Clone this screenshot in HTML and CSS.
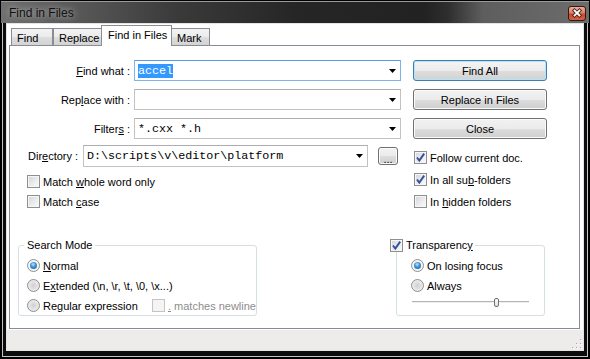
FILE: index.html
```html
<!DOCTYPE html>
<html lang="en">
<head>
    <meta charset="UTF-8">
    <title>Find in Files</title>
    <link rel="stylesheet" href="styles.css">
</head>
<body>
    <div class="window">
        <div class="titlebar">
            <span class="title">Find in Files</span>
            <span class="close-btn">
                <svg width="18" height="15" viewBox="0 0 18 15">
                    <path d="M6.5 4.5 L11.5 9.5 M11.5 4.5 L6.5 9.5" stroke="#4a2018" stroke-width="3.6" stroke-linecap="square"/>
                    <path d="M6.5 4.5 L11.5 9.5 M11.5 4.5 L6.5 9.5" stroke="#fff" stroke-width="1.8" stroke-linecap="square"/>
                </svg>
            </span>
        </div>
        <div class="client">
            <div class="tabs">
                <div class="tab tab-find">Find</div>
                <div class="tab tab-replace">Replace</div>
                <div class="tab tab-active">Find in Files</div>
                <div class="tab tab-mark">Mark</div>
            </div>
            <div class="panel">
                <div class="top">
                    <div class="fields">
                        <div class="field">
                            <span class="field-label"><u>F</u>ind what :</span>
                            <div class="combo combo-wide combo-focus">
                                <span class="combo-text"><span class="sel">accel</span></span>
                                <svg class="arrow" width="7" height="4" viewBox="0 0 7 4"><path d="M0 0 H7 L3.5 4 Z" fill="#000"/></svg>
                            </div>
                        </div>
                        <div class="field">
                            <span class="field-label">Rep<u>l</u>ace with :</span>
                            <div class="combo combo-wide">
                                <span class="combo-text"></span>
                                <svg class="arrow" width="7" height="4" viewBox="0 0 7 4"><path d="M0 0 H7 L3.5 4 Z" fill="#000"/></svg>
                            </div>
                        </div>
                        <div class="field">
                            <span class="field-label">Filter<u>s</u> :</span>
                            <div class="combo combo-wide">
                                <span class="combo-text">*.cxx *.h</span>
                                <svg class="arrow" width="7" height="4" viewBox="0 0 7 4"><path d="M0 0 H7 L3.5 4 Z" fill="#000"/></svg>
                            </div>
                        </div>
                    </div>
                    <div class="buttons">
                        <button class="btn btn-default">Find All</button>
                        <button class="btn">Replace in Files</button>
                        <button class="btn">Close</button>
                    </div>
                </div>

                <div class="mid">
                    <div class="mid-left">
                        <div class="dir-row">
                            <span class="dir-label">Dir<u>e</u>ctory :</span>
                            <div class="combo combo-dir">
                                <span class="combo-text">D:\scripts\v\editor\platform</span>
                                <svg class="arrow" width="7" height="4" viewBox="0 0 7 4"><path d="M0 0 H7 L3.5 4 Z" fill="#000"/></svg>
                            </div>
                            <button class="btn btn-browse">...</button>
                        </div>
                        <div class="checks-left">
                            <div class="check"><span class="cb"></span><span>Match <u>w</u>hole word only</span></div>
                            <div class="check"><span class="cb"></span><span>Match <u>c</u>ase</span></div>
                        </div>
                    </div>
                    <div class="mid-right">
                        <div class="check">
                            <span class="cb"><svg width="11" height="11" viewBox="0 0 11 11"><path d="M2 5.5 L4.3 8.6 L9.2 1.6" stroke="#33509a" stroke-width="1.9" fill="none"/></svg></span>
                            <span>Follow current doc.</span>
                        </div>
                        <div class="check">
                            <span class="cb"><svg width="11" height="11" viewBox="0 0 11 11"><path d="M2 5.5 L4.3 8.6 L9.2 1.6" stroke="#33509a" stroke-width="1.9" fill="none"/></svg></span>
                            <span>In all su<u>b</u>-folders</span>
                        </div>
                        <div class="check"><span class="cb"></span><span>In <u>h</u>idden folders</span></div>
                    </div>
                </div>

                <div class="bottom">
                    <fieldset class="group group-mode">
                        <legend>Search Mode</legend>
                        <div class="radio-list">
                            <div class="radio-row"><span class="radio on"></span><span><u>N</u>ormal</span></div>
                            <div class="radio-row"><span class="radio"></span><span>E<u>x</u>tended (\n, \r, \t, \0, \x...)</span></div>
                            <div class="radio-row">
                                <span class="radio"></span><span class="regex-text">Re<u>g</u>ular expression</span>
                                <span class="check disabled"><span class="cb"></span><span><u>.</u> matches newline</span></span>
                            </div>
                        </div>
                    </fieldset>
                    <fieldset class="group group-trans">
                        <legend class="check">
                            <span class="cb"><svg width="11" height="11" viewBox="0 0 11 11"><path d="M2 5.5 L4.3 8.6 L9.2 1.6" stroke="#33509a" stroke-width="1.9" fill="none"/></svg></span>
                            <span>Transparenc<u>y</u></span>
                        </legend>
                        <div class="radio-list">
                            <div class="radio-row"><span class="radio on"></span><span>On losing focus</span></div>
                            <div class="radio-row"><span class="radio"></span><span>Always</span></div>
                        </div>
                        <div class="slider">
                            <span class="track track-left"></span>
                            <span class="thumb"></span>
                            <span class="track track-right"></span>
                        </div>
                    </fieldset>
                </div>
            </div>
            <div class="statusbar">
                <svg class="grip" width="11" height="11" viewBox="0 0 11 11">
                    <g fill="#fff"><rect x="10" y="2" width="1" height="1"/><rect x="10" y="6" width="1" height="1"/><rect x="6" y="6" width="1" height="1"/><rect x="10" y="10" width="1" height="1"/><rect x="6" y="10" width="1" height="1"/><rect x="2" y="10" width="1" height="1"/></g>
                    <g fill="#a9a6a6"><rect x="9" y="1" width="1" height="1"/><rect x="9" y="5" width="1" height="1"/><rect x="5" y="5" width="1" height="1"/><rect x="9" y="9" width="1" height="1"/><rect x="5" y="9" width="1" height="1"/><rect x="1" y="9" width="1" height="1"/></g>
                </svg>
            </div>
        </div>
    </div>
</body>
</html>
```

FILE: styles.css
```css
body {
    margin: 0;
    background: #fff;
    font-family: "Liberation Sans", Arial, sans-serif;
    font-size: 11px;
    color: #000;
}
.window {
    width: 590px;
    height: 359px;
    box-sizing: border-box;
    border: 1px solid #000;
    background: #0c0c0c;
    box-shadow: inset 0 0 0 1px #000, inset 0 0 0 2px #c4c4c4;
    display: flex;
    flex-direction: column;
}
.titlebar {
    height: 22px;
    flex-shrink: 0;
    display: flex;
    justify-content: space-between;
    align-items: flex-start;
    padding: 0 3px 0 8px;
    background: linear-gradient(to right, #707070 0%, #5a5a5a 12%, #3a3a3a 30%, #262626 50%, #222 72%, #2e2e2e 76%, #5e5e5e 82%, #6c6c6c 100%);
    box-shadow: inset 0 1px 0 #9a9a9a;
}
.title {
    font-size: 12px;
    line-height: 22px;
    padding-top: 1px;
    color: #111;
    text-shadow: 0 0 6px rgba(220, 220, 220, 0.7), 0 0 10px rgba(200, 200, 200, 0.5);
}
.close-btn {
    display: block;
    width: 18px;
    height: 15px;
    margin-top: 5px;
    box-sizing: border-box;
    border: 1px solid #3a1610;
    border-radius: 3px;
    background: linear-gradient(#eab0a0 0%, #dc7e66 45%, #c8472d 55%, #d0654a 100%);
    overflow: hidden;
}
.close-btn svg {
    display: block;
    margin: -1px 0 0 -1px;
}
.client {
    flex: 1;
    margin: 1px 6px 8px 6px;
    background: #fff;
    box-shadow: 0 0 0 1px #e4e4e4;
    display: flex;
    flex-direction: column;
}

/* tabs */
.tabs {
    height: 21px;
    flex-shrink: 0;
    display: flex;
    align-items: flex-end;
    padding-left: 4px;
}
.tab {
    height: 17px;
    box-sizing: border-box;
    border: 1px solid #898c95;
    border-bottom: none;
    background: linear-gradient(#f3f3f3 0%, #ebebeb 50%, #dddddd 51%, #d3d3d3 100%);
    padding: 3px 0 0 5px;
    line-height: 13px;
    white-space: nowrap;
}
.tab-find { width: 42px; }
.tab-replace { width: 49px; margin-left: 0; }
.tab-active {
    position: relative;
    z-index: 1;
    width: 71px;
    height: 21px;
    margin-left: -1px;
    margin-bottom: -1px;
    padding: 3px 0 0 6px;
    background: #fff;
}
.tab-mark { width: 39px; margin-left: -1px; }

.panel {
    margin-left: 2px;
    width: 571px;
    height: 284px;
    flex-shrink: 0;
    box-sizing: border-box;
    border: 1px solid #898c95;
    background: #fff;
}

/* combos and buttons */
.top {
    display: flex;
    margin-top: 14px;
}
.fields {
    display: flex;
    flex-direction: column;
    gap: 8px;
}
.field {
    display: flex;
    align-items: center;
    height: 21px;
}
.field-label {
    width: 120px;
    margin-right: 4px;
    text-align: right;
    white-space: nowrap;
}
.combo {
    display: flex;
    align-items: center;
    height: 21px;
    box-sizing: border-box;
    border: 1px solid #c3c3c3;
    border-top-color: #abadb3;
    background: #fff;
}
.combo-focus {
    border-color: #7eb4ea;
    border-top-color: #569de5;
}
.combo-wide { width: 267px; }
.combo-text {
    flex: 1;
    padding-left: 3px;
    font-family: "Liberation Mono", "Courier New", monospace;
    font-size: 11.7px;
    line-height: 14px;
    white-space: pre;
}
.sel {
    background: #3399ff;
    color: #fff;
}
.arrow {
    display: block;
    margin-right: 4px;
}
.buttons {
    display: flex;
    flex-direction: column;
    gap: 8px;
    width: 134px;
    margin-left: 12px;
}
.btn {
    height: 21px;
    box-sizing: border-box;
    border: 1px solid #707070;
    border-radius: 3px;
    background: linear-gradient(#f2f2f2 0%, #ebebeb 50%, #dddddd 51%, #cfcfcf 100%);
    box-shadow: inset 0 0 0 1px #fbfbfb;
    font-family: "Liberation Sans", Arial, sans-serif;
    font-size: 11px;
    color: #000;
    padding: 0;
}
.btn-default {
    border-color: #3c7fb1;
    box-shadow: inset 0 0 0 1px #b8e2f6;
    background: linear-gradient(#eaf6fd 0%, #d9f0fc 50%, #bee6fd 51%, #a7d9f5 100%);
    background: linear-gradient(#f4f4f4 0%, #ececec 50%, #dedede 51%, #d2d2d2 100%);
}

/* directory row and checks */
.mid {
    display: flex;
    margin-top: 6px;
}
.mid-left { width: 404px; }
.dir-row {
    display: flex;
    align-items: center;
    height: 22px;
    padding-left: 18px;
}
.dir-label {
    width: 55px;
    white-space: nowrap;
}
.combo-dir {
    width: 285px;
    height: 22px;
}
.btn-browse {
    width: 20px;
    height: 18px;
    margin-left: 10px;
    line-height: 18px;
    padding-top: 2px;
}
.checks-left {
    display: flex;
    flex-direction: column;
    gap: 7px;
    margin-top: 8px;
    padding-left: 17px;
}
.mid-right {
    display: flex;
    flex-direction: column;
    gap: 9px;
    padding-top: 6px;
}
.check {
    display: flex;
    align-items: center;
    gap: 3px;
    height: 13px;
    white-space: nowrap;
}
.cb {
    display: block;
    width: 13px;
    height: 13px;
    flex-shrink: 0;
    box-sizing: border-box;
    border: 1px solid #8e8f8f;
    background: linear-gradient(135deg, #d2d4d6 0%, #eceeef 60%, #fbfbfb 100%);
    box-shadow: inset 0 0 0 1px #f6f6f6;
}
.cb svg { display: block; }
.disabled { color: #8d8d8d; }
.disabled .cb {
    border-color: #c4c4c4;
    background: #f4f4f4;
    box-shadow: none;
}

/* group boxes */
.bottom {
    display: flex;
    align-items: flex-start;
    margin-top: 31px;
}
.group {
    margin: 0;
    min-width: 0;
    height: 77px;
    box-sizing: border-box;
    border: 1px solid #d5dfe5;
    border-radius: 3px;
    padding: 7px 0 0 8px;
}
.group legend {
    padding: 0 3px;
    margin-left: -3px;
    line-height: 13px;
    height: 13px;
}
.group-mode {
    width: 239px;
    margin-left: 8px;
}
.group-trans {
    width: 149px;
    margin-left: 139px;
    padding-left: 14px;
}
.group-trans legend {
    margin-left: -21px;
    padding: 0 2px 0 0;
}
.radio-list {
    display: flex;
    flex-direction: column;
    gap: 7px;
}
.radio-row {
    display: flex;
    align-items: center;
    gap: 3px;
    height: 13px;
    white-space: nowrap;
}
.radio {
    display: block;
    width: 13px;
    height: 13px;
    flex-shrink: 0;
    box-sizing: border-box;
    border: 1px solid #8e8f8f;
    border-radius: 50%;
    background: radial-gradient(circle at 50% 50%, #cfcfcf 0%, #e2e2e2 45%, #f6f6f6 100%);
}
.radio.on {
    background: #f4f4f4;
}
.radio.on::after {
    content: '';
    display: block;
    width: 7px;
    height: 7px;
    margin: 2px;
    border-radius: 50%;
    background: radial-gradient(circle at 45% 35%, #c4e6fc 0%, #3f98dc 40%, #1a5798 100%);
}
.regex-text { width: 106px; }
.slider {
    display: flex;
    align-items: center;
    width: 117px;
    height: 10px;
    margin-top: 5px;
    margin-left: 1px;
}
.track {
    height: 0;
    border-top: 1px solid #b4b4b4;
    border-bottom: 1px solid #eeeeee;
}
.track-left { width: 82px; }
.track-right { flex: 1; }
.thumb {
    width: 5px;
    height: 9px;
    box-sizing: border-box;
    border: 1px solid #707070;
    border-radius: 2px;
    background: linear-gradient(#fdfdfd, #e0e0e0);
}

.statusbar {
    flex: 1;
    margin-top: 1px;
    background: #eeebeb;
    display: flex;
    justify-content: flex-end;
    align-items: flex-end;
    padding: 0 1px 1px 0;
}
.grip { display: block; }
```
